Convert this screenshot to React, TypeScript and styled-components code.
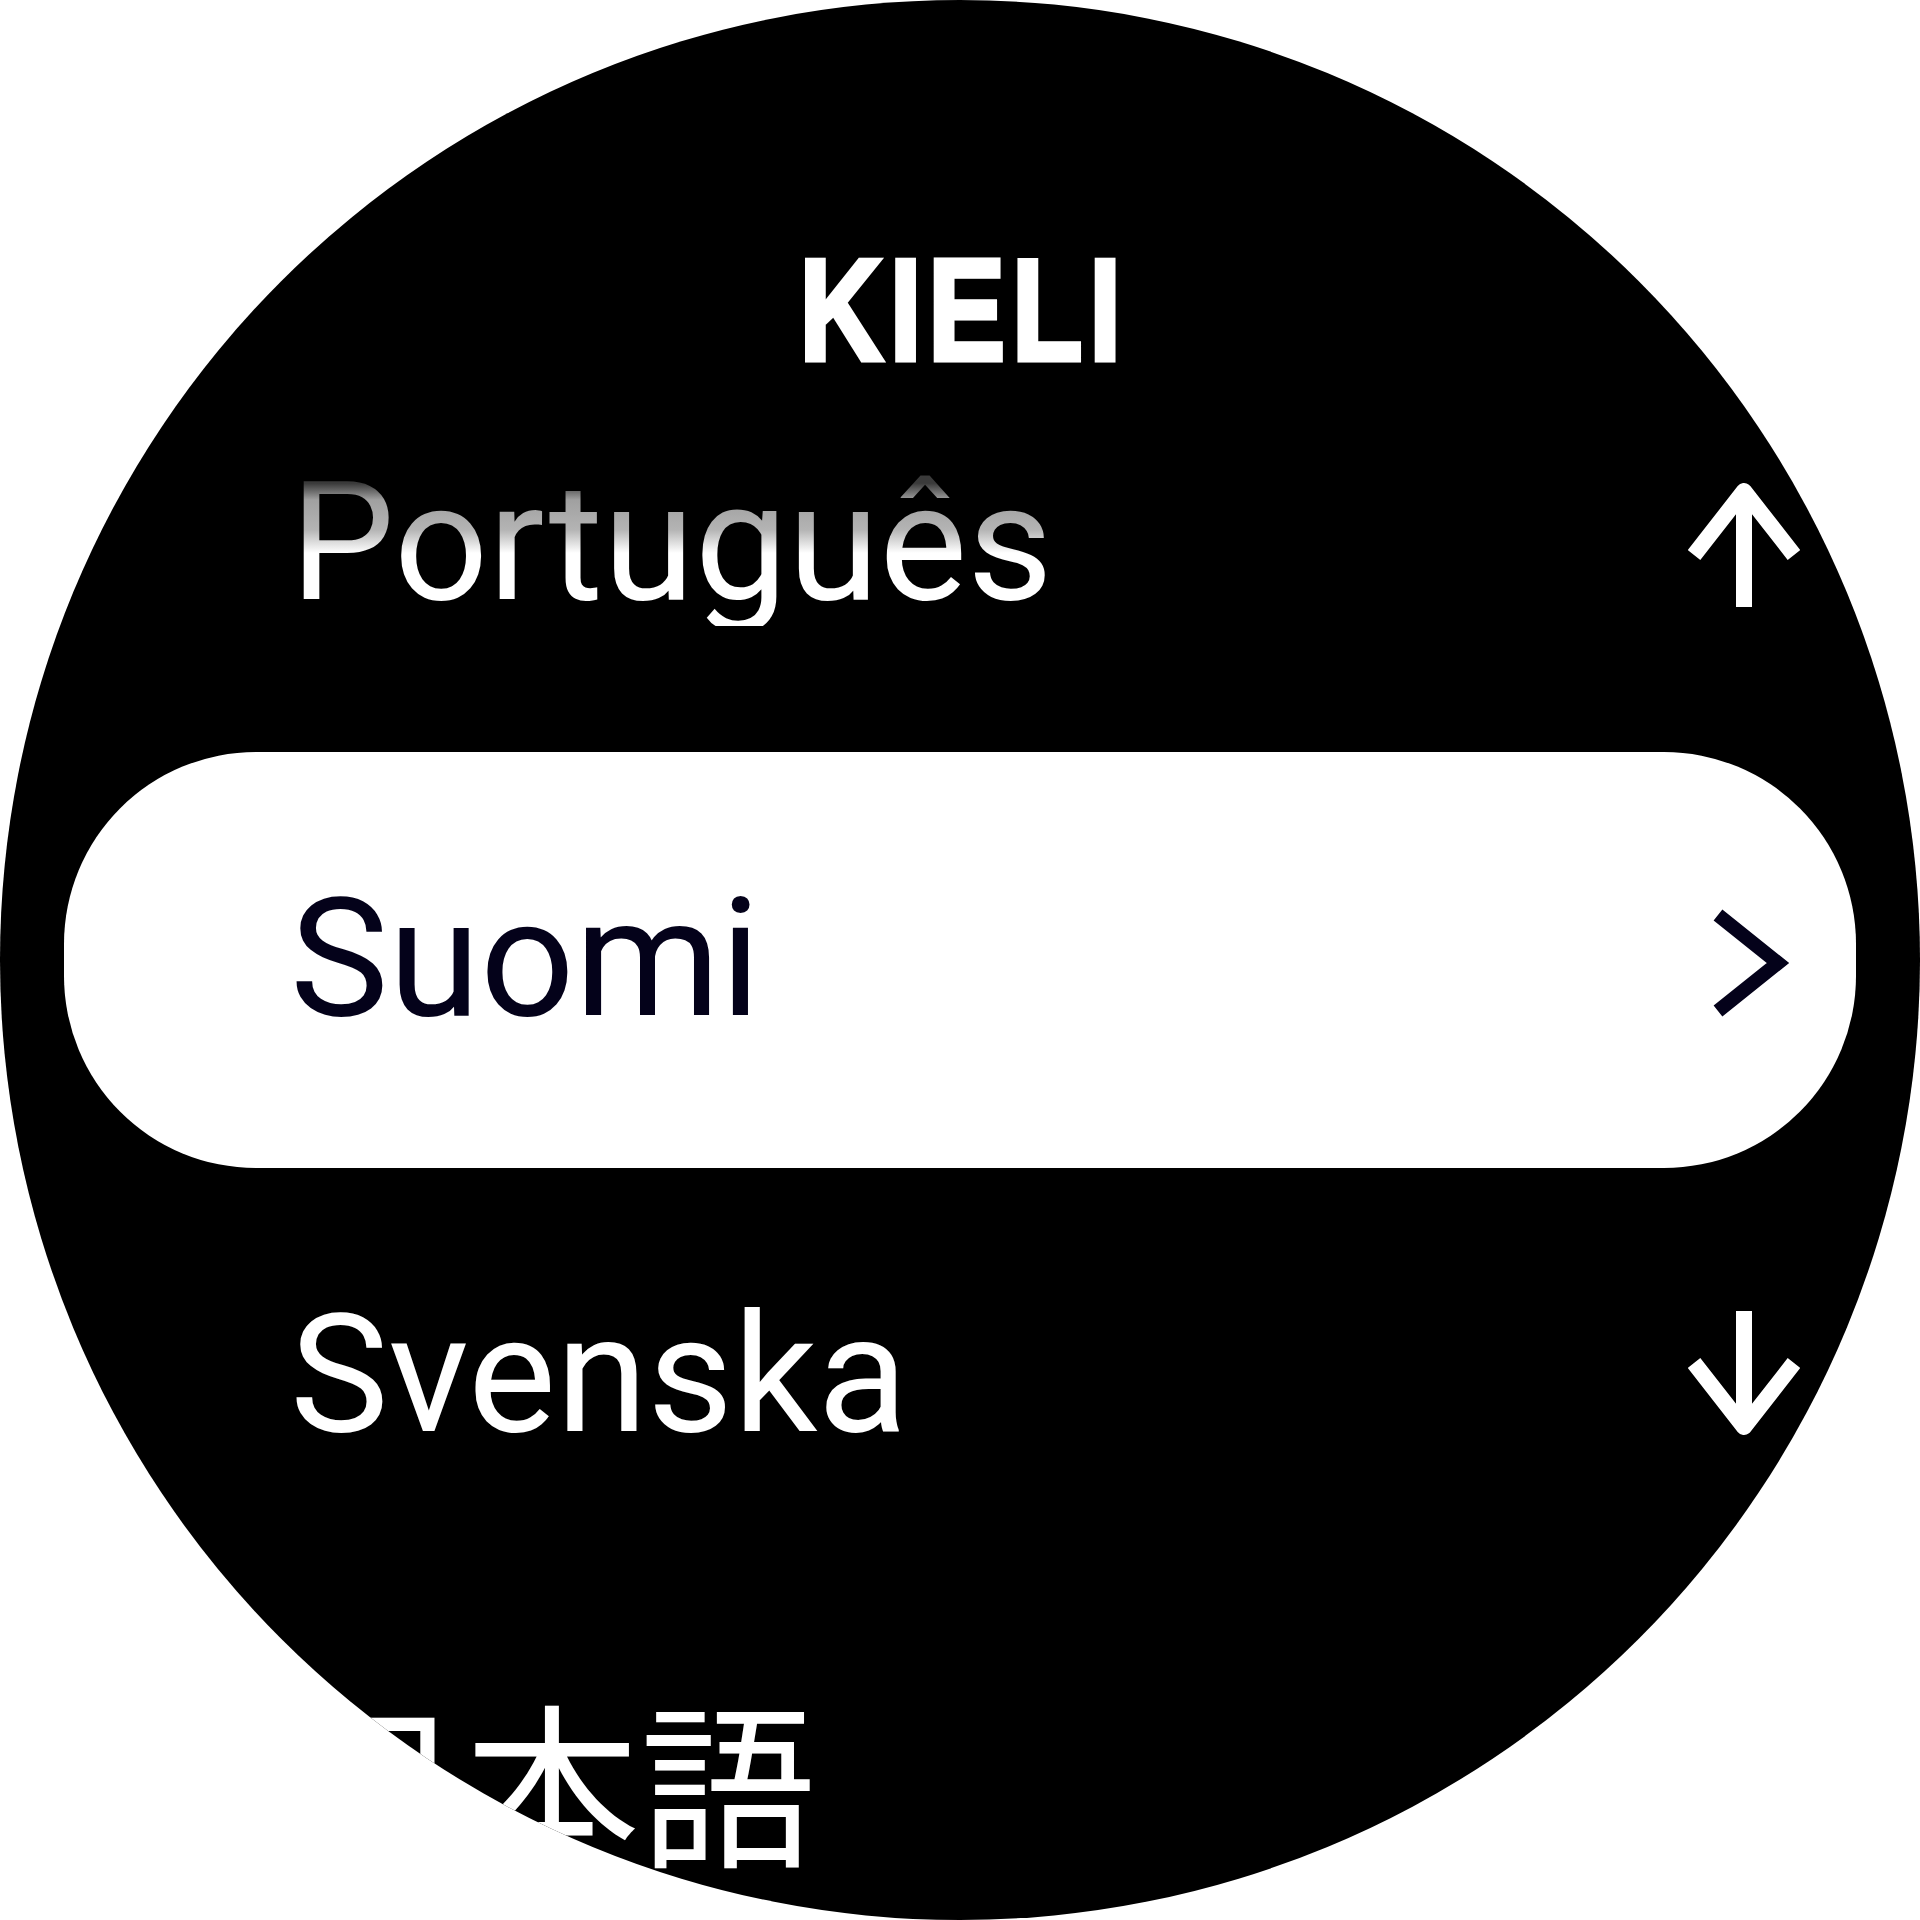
import styled, { createGlobalStyle } from "styled-components";

const GlobalStyle = createGlobalStyle`
  html, body {
    margin: 0;
    padding: 0;
    background: #ffffff;
  }
`;

const Screen = styled.div`
  width: 1920px;
  height: 1920px;
  border-radius: 50%;
  background: #000000;
  overflow: hidden;
  display: flex;
  flex-direction: column;
  font-family: Roboto, "Liberation Sans", Arial, sans-serif;
`;

const Title = styled.h1`
  margin: 0;
  padding-top: 284px;
  height: 52px;
  line-height: 52px;
  text-align: center;
  color: #ffffff;
  font-family: "Liberation Sans", Arial, sans-serif;
  font-size: 145px;
  font-weight: 700;

  span {
    display: inline-block;
    letter-spacing: 8px;
    padding-left: 8px;
    transform: scaleX(0.8);
    -webkit-text-stroke: 5px #ffffff;
  }
`;

const List = styled.ul`
  margin: 0;
  padding: 0;
  list-style: none;
  display: flex;
  flex-direction: column;
`;

const Row = styled.li<{ $selected?: boolean }>`
  flex: 0 0 auto;
  box-sizing: border-box;
  height: 416px;
  margin: 0 64px;
  padding: 0 56px 2px 226px;
  display: flex;
  align-items: center;
  border-radius: 192px;
  background: ${(p) => (p.$selected ? "#ffffff" : "transparent")};
  color: ${(p) => (p.$selected ? "#04021a" : "#ffffff")};
`;

const Label = styled.span<{ $cjk?: boolean; $fade?: boolean }>`
  flex: 1;
  line-height: 1;
  white-space: nowrap;
  font-size: ${(p) => (p.$cjk ? "176px" : "166px")};
  font-weight: 400;
  font-family: ${(p) =>
    p.$cjk
      ? `"Noto Sans CJK JP", "Noto Sans CJK SC", sans-serif`
      : `Roboto, "Liberation Sans", Arial, sans-serif`};
  margin-left: ${(p) => (p.$cjk ? "-2px" : "0")};
  margin-top: ${(p) => (p.$cjk ? "-26px" : "0")};
  ${(p) =>
    p.$fade &&
    `
    background: linear-gradient(180deg, #3a3a3a 14%, #a0a0a0 24%, #b4b4b4 42%, #ffffff 56%);
    -webkit-background-clip: text;
    background-clip: text;
    color: transparent;
  `}
`;

const Icon = styled.svg`
  flex: 0 0 auto;
  width: 112px;
  height: 128px;
`;

const ArrowUp = () => (
  <Icon
    viewBox="0 0 112 128"
    fill="none"
    stroke="#ffffff"
    strokeWidth={16}
    strokeLinejoin="round"
  >
    <path d="M6,76 L56,12 L106,76 M56,12 L56,128" />
  </Icon>
);

const ArrowDown = () => (
  <Icon
    viewBox="0 0 112 128"
    fill="none"
    stroke="#ffffff"
    strokeWidth={16}
    strokeLinejoin="round"
  >
    <path d="M6,52 L56,116 L106,52 M56,0 L56,116" />
  </Icon>
);

const Chevron = () => (
  <Icon viewBox="0 0 112 128" fill="none" stroke="#04021a" strokeWidth={14}>
    <polyline points="30,20 90,68 30,116" strokeLinejoin="miter" />
  </Icon>
);

export default function App() {
  return (
    <>
      <GlobalStyle />
      <Screen>
        <Title>
          <span>KIELI</span>
        </Title>
        <List>
          <Row>
            <Label $fade>Português</Label>
            <ArrowUp />
          </Row>
          <Row $selected>
            <Label>Suomi</Label>
            <Chevron />
          </Row>
          <Row>
            <Label>Svenska</Label>
            <ArrowDown />
          </Row>
          <Row>
            <Label $cjk>日本語</Label>
          </Row>
        </List>
      </Screen>
    </>
  );
}
